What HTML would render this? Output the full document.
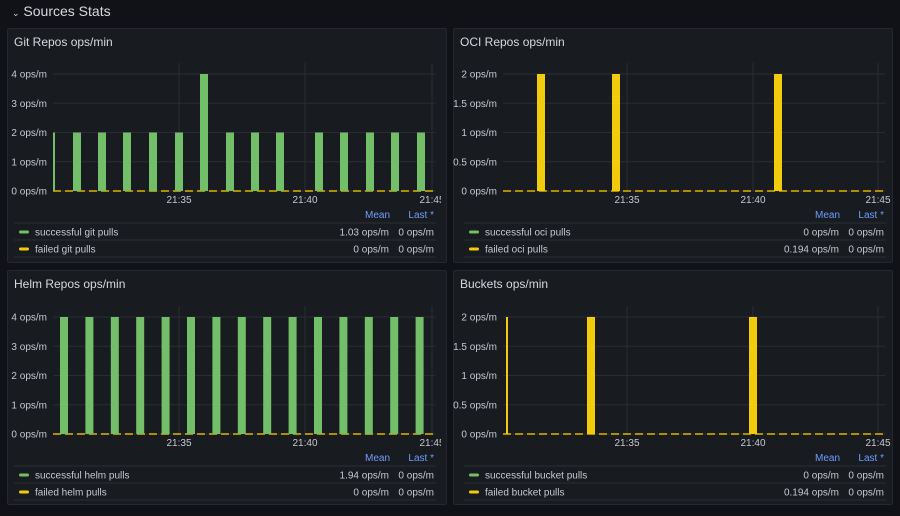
<!DOCTYPE html>
<html><head><style>
body{margin:0;width:900px;height:516px;background:#111217;font-family:"Liberation Sans",sans-serif;color:#ccccdc;overflow:hidden;position:relative}
.t{position:absolute;left:12px;top:3px;font-size:14px;color:#d8d9e0}
.p{position:absolute;width:438px;height:233px;background:#181b1f;border:1px solid #24272e;border-radius:2px}
.pt{position:absolute;left:6px;top:6px;font-size:12px;color:#d8d9e0}
svg{position:absolute;left:0;top:0}
svg text{font-family:"Liberation Sans",sans-serif;font-size:10px;fill:#c7c8d1}
</style></head><body>
<div class="t"><span style="font-size:9px">⌄</span> Sources Stats</div>
<div class="p" style="left:7px;top:28px"><div class="pt">Git Repos ops/min</div></div>
<div class="p" style="left:453px;top:28px"><div class="pt">OCI Repos ops/min</div></div>
<div class="p" style="left:7px;top:270px"><div class="pt">Helm Repos ops/min</div></div>
<div class="p" style="left:453px;top:270px"><div class="pt">Buckets ops/min</div></div>
<svg id="s" width="900" height="516"></svg>
<script>
var s='';var cid=0;
function panel(ox,oy,labels,bars,thin,grid,legend){
 var x0=ox+53,x1=ox+435,yb=oy+191,yt=oy+74;cid++;
 s+='<clipPath id="c'+cid+'"><rect x="'+ox+'" y="'+oy+'" width="441" height="260"/></clipPath>';
 for(var i=0;i<5;i++){var y=yb-(yb-yt)*i/4;s+='<line x1="'+x0+'" x2="'+x1+'" y1="'+y+'" y2="'+y+'" stroke="#2a2c31"/>';
  s+='<text x="'+(ox+47)+'" y="'+(y+3.5)+'" text-anchor="end">'+labels[i]+'</text>';}
 var tl=['21:35','21:40','21:45'];
 grid.forEach(function(g,i){s+='<line x1="'+(ox+g)+'" x2="'+(ox+g)+'" y1="'+(oy+63)+'" y2="'+yb+'" stroke="#2a2c31"/>';
  s+='<text clip-path="url(#c'+cid+')" x="'+(ox+g)+'" y="'+(oy+203)+'" text-anchor="middle">'+tl[i]+'</text>';});
 s+='<line x1="'+x0+'" x2="'+x1+'" y1="'+yb+'" y2="'+yb+'" stroke="#e0b400" stroke-dasharray="8,4" stroke-width="1.5"/>';
 bars.forEach(function(b){var h=(yb-yt)*b[1];s+='<rect x="'+(ox+b[0])+'" y="'+(yb-h)+'" width="'+(b[2]||8)+'" height="'+h+'" fill="'+b[3]+'"/>';});
 s+='<text x="'+(ox+390)+'" y="'+(oy+218)+'" text-anchor="end" style="fill:#6e9fff">Mean</text>';
 s+='<text x="'+(ox+434)+'" y="'+(oy+218)+'" text-anchor="end" style="fill:#6e9fff">Last *</text>';
 [223,240,257].forEach(function(y){s+='<line x1="'+(ox+14)+'" x2="'+(ox+436)+'" y1="'+(oy+y)+'" y2="'+(oy+y)+'" stroke="#2a2c31"/>';});
 legend.forEach(function(l,i){var y=oy+232+i*17;
  s+='<rect x="'+(ox+19)+'" y="'+(y-1.5)+'" width="10" height="3" rx="1.5" fill="'+(i?'#f2cc0c':'#73bf69')+'"/>';
  s+='<text x="'+(ox+35)+'" y="'+(y+3.5)+'">'+l[0]+'</text><text x="'+(ox+389)+'" y="'+(y+3.5)+'" text-anchor="end">'+l[1]+'</text><text x="'+(ox+434)+'" y="'+(y+3.5)+'" text-anchor="end">'+l[2]+'</text>';});
}
var G='#73bf69',Y='#f2cc0c';
var gl=['0 ops/m','1 ops/m','2 ops/m','3 ops/m','4 ops/m'];
var ol=['0 ops/m','0.5 ops/m','1 ops/m','1.5 ops/m','2 ops/m'];
var gb=[[53,.5,2,G]];[73,98,123,149,175,226,251,276,315,340,366,391,417].forEach(function(x){gb.push([x,.5,8,G]);});gb.push([200,1,8,G]);
panel(0,0,gl,gb,0,[179,305,432],[['successful git pulls','1.03 ops/m','0 ops/m'],['failed git pulls','0 ops/m','0 ops/m']]);
panel(450,0,ol,[[87,1,8,Y],[162,1,8,Y],[324,1,8,Y]],0,[177,303,428],[['successful oci pulls','0 ops/m','0 ops/m'],['failed oci pulls','0.194 ops/m','0 ops/m']]);
var hb=[];for(var i=0;i<15;i++)hb.push([60+i*25.4,1,8,G]);
panel(0,243,gl,hb,0,[179,305,432],[['successful helm pulls','1.94 ops/m','0 ops/m'],['failed helm pulls','0 ops/m','0 ops/m']]);
panel(450,243,ol,[[56,1,2,Y],[137,1,8,Y],[299,1,8,Y]],0,[177,303,428],[['successful bucket pulls','0 ops/m','0 ops/m'],['failed bucket pulls','0.194 ops/m','0 ops/m']]);
document.getElementById('s').innerHTML=s;
</script>
</body></html>
